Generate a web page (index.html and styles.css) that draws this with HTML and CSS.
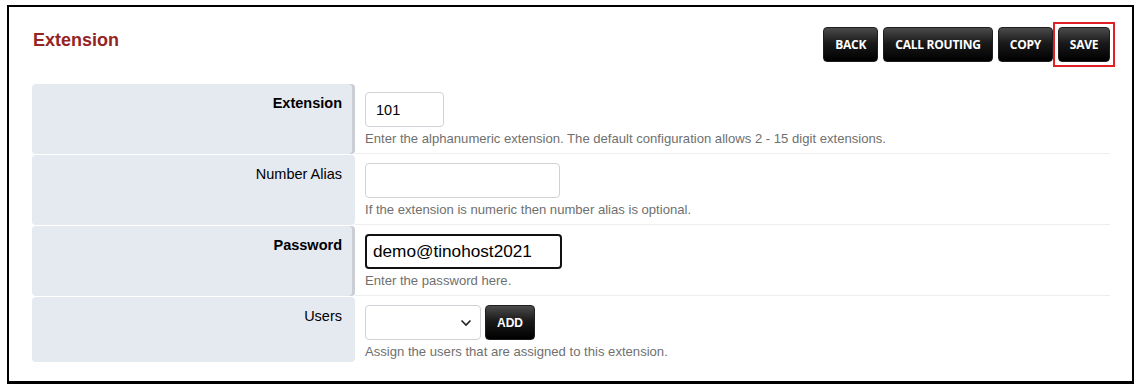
FILE: index.html
```html
<!DOCTYPE html>
<html lang="en">
<head>
    <meta charset="UTF-8">
    <meta name="viewport" content="width=device-width, initial-scale=1.0">
    <link rel="stylesheet" href="styles.css">
</head>
<body>
    <div class="frame">
        <div class="action-bar">
            <div class="heading">Extension</div>
            <div class="actions">
                <button class="btn">BACK</button>
                <button class="btn">CALL ROUTING</button>
                <button class="btn">COPY</button>
                <span class="marked"><button class="btn">SAVE</button></span>
            </div>
        </div>

        <div class="form-table">
            <div class="form-row">
                <div class="field-label required">Extension</div>
                <div class="field-value">
                    <input type="text" class="field-input input-short" value="101">
                    <div class="field-help">Enter the alphanumeric extension. The default configuration allows 2 - 15 digit extensions.</div>
                </div>
            </div>
            <div class="form-row">
                <div class="field-label">Number Alias</div>
                <div class="field-value">
                    <input type="text" class="field-input" value="">
                    <div class="field-help">If the extension is numeric then number alias is optional.</div>
                </div>
            </div>
            <div class="form-row">
                <div class="field-label required">Password</div>
                <div class="field-value">
                    <input type="text" class="field-input input-focus" value="demo@tinohost2021">
                    <div class="field-help">Enter the password here.</div>
                </div>
            </div>
            <div class="form-row">
                <div class="field-label">Users</div>
                <div class="field-value">
                    <div class="inline-group">
                        <div class="field-select">
                            <svg width="12" height="8" viewBox="0 0 12 8"><path d="M1.5 1.5 L6 6 L10.5 1.5" fill="none" stroke="#222" stroke-width="1.6"/></svg>
                        </div>
                        <button class="btn btn-small">ADD</button>
                    </div>
                    <div class="field-help">Assign the users that are assigned to this extension.</div>
                </div>
            </div>
        </div>
    </div>
</body>
</html>
```

FILE: styles.css
```css
* {
    box-sizing: border-box;
}
body {
    margin: 0;
    font-family: "Liberation Sans", Arial, sans-serif;
    background-color: #ffffff;
    color: #000;
}
.frame {
    margin: 5px 7px 0 7px;
    width: 1127px;
    height: 379px;
    border: 2px solid #000;
    border-bottom-width: 3px;
    padding: 20px 22px 0 23px;
}
.action-bar {
    display: flex;
    justify-content: space-between;
    align-items: flex-start;
    margin-bottom: 22px;
}
.heading {
    margin-top: 2px;
    margin-left: 1px;
    font-size: 18px;
    line-height: 22px;
    font-weight: bold;
    color: #952424;
}
.actions {
    display: flex;
    align-items: center;
    gap: 5px;
    margin: -5px -5px -5px 0;
}
.btn {
    height: 35px;
    padding: 0 11px;
    border: 1px solid #1e1e1e;
    border-radius: 4px;
    background: linear-gradient(to bottom, #4b4b4b 0%, #1a1a1a 45%, #000 100%);
    color: #fff;
    font-family: "Open Sans", sans-serif;
    font-weight: bold;
    font-size: 12px;
    letter-spacing: -0.25px;
    cursor: pointer;
}
/* red highlight box round the save button */
.marked {
    display: block;
    margin-left: -5px;
    border: 2px solid #e01f26;
    padding: 3px;
}
.marked .btn {
    display: block;
    width: 52px;
    padding: 0;
}
.btn-small {
    width: 50px;
    padding: 0;
    font-family: "Liberation Sans", Arial, sans-serif;
    font-size: 12px;
    letter-spacing: 0;
}
.form-table {
    display: flex;
    flex-direction: column;
    gap: 1px;
}
.form-row {
    display: grid;
    grid-template-columns: 323px 1fr;
}
.field-label {
    background-color: #e5e9f0;
    border-radius: 4px;
    text-align: right;
    padding: 11px 13px 0 0;
    font-size: 14.5px;
    line-height: 17px;
}
.field-label.required {
    font-weight: bold;
    box-shadow: inset -3px 0 0 #cbcfd5;
}
.field-value {
    padding: 8px 0 0 10px;
    border-bottom: 1px solid #eeeeee;
    height: 70px;
}
.form-row:last-child .field-value {
    border-bottom: none;
    height: 65px;
}
.field-input {
    display: block;
    width: 195px;
    height: 35px;
    border: 1px solid #cfd3d8;
    border-radius: 4px;
    padding: 0 10px;
    font-family: "Liberation Sans", Arial, sans-serif;
    font-size: 14.5px;
    color: #000;
}
.input-short {
    width: 79px;
}
.input-focus {
    width: 197px;
    border: 2px solid #111;
    padding: 0 6px;
    font-size: 17.2px;
}
.inline-group {
    display: flex;
    gap: 4px;
}
.field-select {
    width: 116px;
    height: 35px;
    border: 1px solid #cfd3d8;
    border-radius: 4px;
    display: flex;
    justify-content: flex-end;
    align-items: center;
    padding-right: 8px;
}
.field-help {
    margin-top: 4px;
    font-size: 13.1px;
    line-height: 16px;
    color: #6f6f6f;
}
```
